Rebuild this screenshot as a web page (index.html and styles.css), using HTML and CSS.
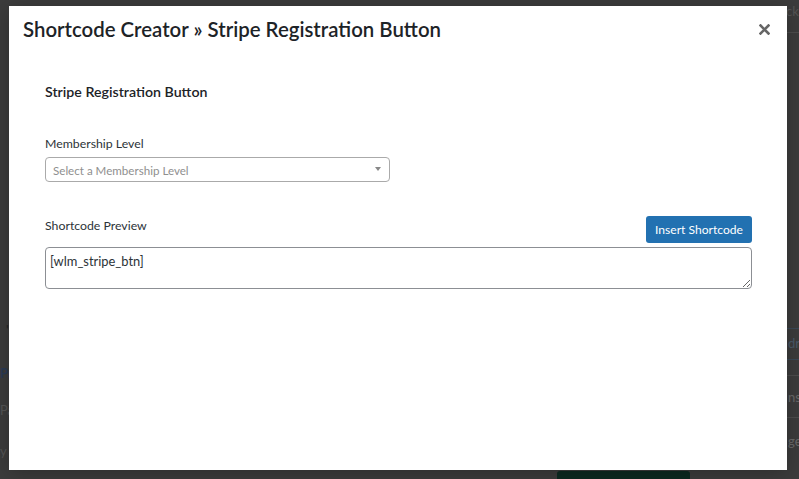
FILE: index.html
```html
<!DOCTYPE html>
<html lang="en">
<head>
<meta charset="utf-8">
<title>Shortcode Creator</title>
<link rel="stylesheet" href="styles.css">
</head>
<body>
<div class="page">
  <span class="frag f-ck">ck</span>
  <div class="strip">
    <span class="rule r1"></span>
    <span class="rule r2"></span>
    <span class="frag f-dra">dra</span>
    <span class="rule r3"></span>
    <span class="rule r4"></span>
    <span class="frag f-ns">ns</span>
    <span class="rule r5"></span>
    <span class="frag f-ge">ge</span>
  </div>
  <span class="frag f-pr">Pr</span>
  <span class="frag f-pa">Pa</span>
  <span class="frag f-y">y</span>
  <span class="frag f-tick">'</span>
  <span class="green-btn"></span>
</div>
<div class="modal">
  <div class="modal-header">
    <h1 class="modal-title">Shortcode Creator » Stripe Registration Button</h1>
    <button class="close" aria-label="Close">
      <svg width="11" height="11" viewBox="0 0 11 11"><path d="M1.5 1.5 L9.5 9.5 M9.5 1.5 L1.5 9.5" stroke="#666" stroke-width="2.6" stroke-linecap="square"/></svg>
    </button>
  </div>
  <div class="modal-body">
    <h2 class="section-title">Stripe Registration Button</h2>
    <label class="field-label">Membership Level</label>
    <div class="select">
      <span class="placeholder">Select a Membership Level</span>
      <span class="arrow"></span>
    </div>
    <div class="preview-row">
      <label class="field-label">Shortcode Preview</label>
      <button class="btn-primary">Insert Shortcode</button>
    </div>
    <textarea class="preview">[wlm_stripe_btn]</textarea>
  </div>
</div>
</body>
</html>
```
FILE: styles.css
```css
html, body {
  margin: 0;
  padding: 0;
}
body {
  width: 799px;
  height: 479px;
  overflow: hidden;
  position: relative;
  background: #3c3c3c;
  font-family: Lato, "Liberation Sans", sans-serif;
  color: #2c3338;
}
.page {
  position: absolute;
  inset: 0;
}
.frag {
  position: absolute;
  font-size: 13px;
  color: #6a6a6a;
  line-height: 16px;
  white-space: nowrap;
}
.strip {
  position: absolute;
  left: 787px;
  top: 0;
  width: 12px;
  height: 479px;
  overflow: hidden;
}
.f-ck { left: 786px; top: 3px; color: #555; }
.f-dra { left: 1px; top: 335px; color: #4a5a6a; }
.f-ns { left: 1px; top: 389px; }
.f-ge { left: 1px; top: 433px; }
.f-pr { left: 0; top: 365px; color: #2a3a55; font-weight: 700; }
.f-pa { left: 0; top: 402px; color: #555; }
.f-y { left: 0; top: 443px; color: #555; }
.f-tick { left: 6px; top: 322px; color: #222; }
.rule {
  position: absolute;
  left: 0;
  width: 12px;
  height: 1px;
  background: #4d4d4d;
}
.r1 { top: 32px; }
.r2 { top: 328px; background: #3a4856; }
.r3 { top: 359px; background: #3a4856; }
.r4 { top: 375px; }
.r5 { top: 417px; }
.green-btn {
  position: absolute;
  left: 557px;
  top: 471px;
  width: 133px;
  height: 12px;
  background: #0c2a21;
  border-radius: 3px;
}
.modal {
  position: absolute;
  left: 9px;
  top: 6px;
  width: 778px;
  height: 464px;
  background: #fff;
  box-shadow: 0 3px 20px rgba(0, 0, 0, 0.25);
  display: flex;
  flex-direction: column;
}
.modal-header {
  display: flex;
  align-items: center;
  justify-content: space-between;
  padding: 11px 17px 13px 14px;
}
.modal-title {
  margin: 0;
  font-size: 20.4px;
  line-height: 24px;
  font-weight: 600;
  color: #1d2327;
}
.close {
  border: 0;
  background: none;
  padding: 0;
  width: 11px;
  height: 11px;
  display: flex;
}
.modal-body {
  padding: 28px 35px 0 36px;
  display: flex;
  flex-direction: column;
}
.section-title {
  margin: 0;
  font-size: 14.2px;
  line-height: 20px;
  font-weight: 600;
  color: #1d2327;
}
.field-label {
  font-size: 12.3px;
  line-height: 18px;
  color: #2c3338;
}
.section-title + .field-label {
  margin-top: 33px;
}
.select {
  margin-top: 4px;
  width: 345px;
  height: 25px;
  box-sizing: border-box;
  border: 1px solid #aaa;
  border-radius: 4px;
  display: flex;
  align-items: center;
  justify-content: space-between;
  padding: 1px 8px 0 7px;
}
.placeholder {
  font-size: 11.6px;
  color: #8f8f8f;
}
.arrow {
  width: 0;
  height: 0;
  border-left: 3.5px solid transparent;
  border-right: 3.5px solid transparent;
  border-top: 4px solid #888;
  margin-top: -3px;
}
.preview-row {
  margin-top: 34px;
  display: flex;
  justify-content: space-between;
  align-items: flex-start;
}
.preview-row .field-label {
  margin-top: 1px;
}
.btn-primary {
  height: 27px;
  width: 106px;
  border: 0;
  border-radius: 3px;
  background: #2271b1;
  color: #fff;
  font-family: inherit;
  font-size: 12.1px;
  padding: 0;
}
.preview {
  margin: 4px 0 0;
  height: 42px;
  box-sizing: border-box;
  border: 1px solid #8c8f94;
  border-radius: 4px;
  padding: 4px 4px;
  font-family: inherit;
  font-size: 12.9px;
  line-height: 18px;
  color: #2c3338;
  resize: vertical;
}
```
